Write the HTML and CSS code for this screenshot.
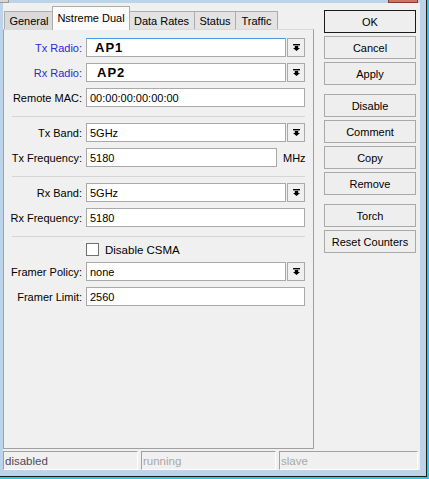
FILE: index.html
```html
<!DOCTYPE html>
<html>
<head>
<meta charset="utf-8">
<link rel="stylesheet" href="styles.css">
</head>
<body>
<div class="frame">
  <div class="strip"><span class="parent-box"></span><span class="close-btn"></span></div>
  <div class="dialog">
    <div class="main">
      <div class="tabs-col">
        <div class="tabstrip">
          <div class="tab t-general">General</div>
          <div class="tab active t-nstreme">Nstreme Dual</div>
          <div class="tab t-rates">Data Rates</div>
          <div class="tab t-status">Status</div>
          <div class="tab t-traffic">Traffic</div>
        </div>
        <div class="panel">
          <div class="row">
            <label class="lbl blue">Tx Radio:</label>
            <div class="field">
              <div class="input focus"><span class="big">AP1</span></div>
              <span class="drop"><svg width="7" height="7" viewBox="0 0 7 7"><rect x="0" y="0" width="7" height="1.4"/><path d="M1.8 2h3.4v2h1.8L3.5 7 0 4h1.8z"/></svg></span>
            </div>
          </div>
          <div class="row">
            <label class="lbl blue">Rx Radio:</label>
            <div class="field">
              <div class="input"><span class="big big2">AP2</span></div>
              <span class="drop"><svg width="7" height="7" viewBox="0 0 7 7"><rect x="0" y="0" width="7" height="1.4"/><path d="M1.8 2h3.4v2h1.8L3.5 7 0 4h1.8z"/></svg></span>
            </div>
          </div>
          <div class="row">
            <label class="lbl">Remote MAC:</label>
            <div class="field"><div class="input">00:00:00:00:00:00</div></div>
          </div>
          <div class="sep"></div>
          <div class="row">
            <label class="lbl">Tx Band:</label>
            <div class="field">
              <div class="input">5GHz</div>
              <span class="drop"><svg width="7" height="7" viewBox="0 0 7 7"><rect x="0" y="0" width="7" height="1.4"/><path d="M1.8 2h3.4v2h1.8L3.5 7 0 4h1.8z"/></svg></span>
            </div>
          </div>
          <div class="row">
            <label class="lbl">Tx Frequency:</label>
            <div class="field">
              <div class="input freq">5180</div>
              <span class="unit">MHz</span>
            </div>
          </div>
          <div class="sep"></div>
          <div class="row">
            <label class="lbl">Rx Band:</label>
            <div class="field">
              <div class="input">5GHz</div>
              <span class="drop"><svg width="7" height="7" viewBox="0 0 7 7"><rect x="0" y="0" width="7" height="1.4"/><path d="M1.8 2h3.4v2h1.8L3.5 7 0 4h1.8z"/></svg></span>
            </div>
          </div>
          <div class="row">
            <label class="lbl">Rx Frequency:</label>
            <div class="field"><div class="input">5180</div></div>
          </div>
          <div class="sep"></div>
          <div class="row check-row">
            <span></span>
            <div class="field"><span class="checkbox"></span><span class="check-label">Disable CSMA</span></div>
          </div>
          <div class="row">
            <label class="lbl">Framer Policy:</label>
            <div class="field">
              <div class="input">none</div>
              <span class="drop"><svg width="7" height="7" viewBox="0 0 7 7"><rect x="0" y="0" width="7" height="1.4"/><path d="M1.8 2h3.4v2h1.8L3.5 7 0 4h1.8z"/></svg></span>
            </div>
          </div>
          <div class="row">
            <label class="lbl">Framer Limit:</label>
            <div class="field"><div class="input">2560</div></div>
          </div>
        </div>
      </div>
      <div class="buttons">
        <div class="btn default">OK</div>
        <div class="btn">Cancel</div>
        <div class="btn">Apply</div>
        <div class="btn gap">Disable</div>
        <div class="btn">Comment</div>
        <div class="btn">Copy</div>
        <div class="btn">Remove</div>
        <div class="btn gap">Torch</div>
        <div class="btn">Reset Counters</div>
      </div>
    </div>
    <div class="statusbar">
      <div class="sbox s1">disabled</div>
      <div class="sbox s2 dim">running</div>
      <div class="sbox s3 dim">slave</div>
    </div>
  </div>
</div>
</body>
</html>
```

FILE: styles.css
```css
html, body {
  margin: 0;
  padding: 0;
  background: #bcd3ea;
}
body {
  font-family: "Liberation Sans", Arial, sans-serif;
  font-size: 11px;
  color: #000;
}
.frame {
  width: 429px;
  height: 479px;
  box-sizing: border-box;
  background: #bcd3ea;
  border-right: 2px solid #35c6e6;
  border-bottom: 2px solid #35c6e6;
  box-shadow: inset -1px -1px 0 #1c1c1c;
  display: flex;
  flex-direction: column;
}
.strip {
  height: 3px;
  display: flex;
  flex: none;
}
.parent-box {
  width: 9px;
  background: #d6d6d6;
  border-right: 1px solid #9a9a9a;
  border-bottom: 1px solid #9a9a9a;
  box-sizing: border-box;
}
.close-btn {
  margin-left: auto;
  margin-right: 9px;
  width: 30px;
  box-sizing: border-box;
  background: #cf7465;
  border: 1px solid #8a3a30;
  border-top: none;
}
.dialog {
  margin-left: 3px;
  width: 417px;
  height: 467px;
  background: #f0f0f0;
  display: flex;
  flex-direction: column;
  flex: none;
}
.main {
  flex: 1;
  display: flex;
  min-height: 0;
}
.tabs-col {
  width: 311px;
  display: flex;
  flex-direction: column;
}
.tabstrip {
  height: 26px;
  display: flex;
  align-items: flex-end;
  padding-left: 1px;
  flex: none;
}
.tab {
  height: 18px;
  box-sizing: border-box;
  border: 1px solid #acacac;
  border-bottom: none;
  background: #e3e3e3;
  display: flex;
  align-items: center;
  justify-content: center;
  margin-left: -1px;
  padding-top: 1px;
}
.t-general { width: 50px; margin-left: 0; background: #dadada; }
.t-nstreme { width: 78px; }
.t-rates { width: 67px; }
.t-status { width: 42px; }
.t-traffic { width: 43px; }
.tab.active {
  height: 24px;
  margin-bottom: -1px;
  background: #fbfbfb;
  position: relative;
  z-index: 1;
  margin-left: -2px;
  margin-right: -1px;
  padding-top: 0;
  padding-bottom: 2px;
}
.panel {
  flex: 1;
  box-sizing: border-box;
  border: 1px solid #a0a0a0;
  border-top-color: #d9d9d9;
  padding: 8px 8px 0 0;
  display: flex;
  flex-direction: column;
  gap: 6px;
}
.row {
  display: grid;
  grid-template-columns: 78px 1fr;
  column-gap: 4px;
  align-items: center;
  height: 19px;
}
.lbl {
  text-align: right;
  white-space: nowrap;
}
.lbl.blue { color: #2a2ad6; }
.field {
  display: flex;
  align-items: center;
  gap: 1px;
  height: 19px;
}
.input {
  flex: 1;
  height: 19px;
  box-sizing: border-box;
  background: #fff;
  border: 1px solid #a9a9a9;
  padding-left: 3px;
  display: flex;
  align-items: center;
  white-space: nowrap;
}
.input.focus { border-top-color: #4a9ae0; }
.input.freq { flex: none; width: 191px; }
.unit { margin-left: 5px; }
.big {
  font-weight: bold;
  font-size: 13px;
  letter-spacing: 1px;
  padding-left: 5px;
}
.big2 { padding-left: 7px; }
.drop {
  width: 18px;
  height: 19px;
  box-sizing: border-box;
  border: 1px solid #a9a9a9;
  background: #f0f0f0;
  display: flex;
  align-items: center;
  justify-content: center;
}
.drop svg { fill: #000; display: block; }
.sep {
  border-top: 1px solid #d5d5d5;
  margin: 3px 0 0 8px;
  height: 0;
}
.check-row { height: 13px; }
.check-row .field { height: 13px; }
.checkbox {
  width: 13px;
  height: 13px;
  box-sizing: border-box;
  background: #fff;
  border: 1px solid #707070;
  flex: none;
}
.check-label { margin-left: 5px; font-size: 11.5px; }
.buttons {
  margin-left: 10px;
  margin-top: 7px;
  width: 92px;
  display: flex;
  flex-direction: column;
  gap: 3px;
}
.btn {
  height: 23px;
  box-sizing: border-box;
  border: 1px solid #a9a9a9;
  background: #eeeeee;
  display: flex;
  align-items: center;
  justify-content: center;
  white-space: nowrap;
}
.btn.default { border-color: #1a1a1a; }
.btn.gap { margin-top: 6px; }
.statusbar {
  margin-top: 2px;
  height: 19px;
  display: flex;
  gap: 3px;
  flex: none;
  padding-right: 2px;
}
.sbox {
  box-sizing: border-box;
  height: 19px;
  border-top: 1px solid #a0a0a0;
  border-left: 1px solid #a0a0a0;
  border-right: 1px solid #fff;
  border-bottom: 1px solid #fff;
  display: flex;
  align-items: center;
  padding-left: 1px;
  color: #4b4b5a;
  font-size: 11.5px;
}
.s1, .s2 { width: 135px; }
.s3 { flex: 1; }
.sbox.dim { color: #a8a8a8; }
```
